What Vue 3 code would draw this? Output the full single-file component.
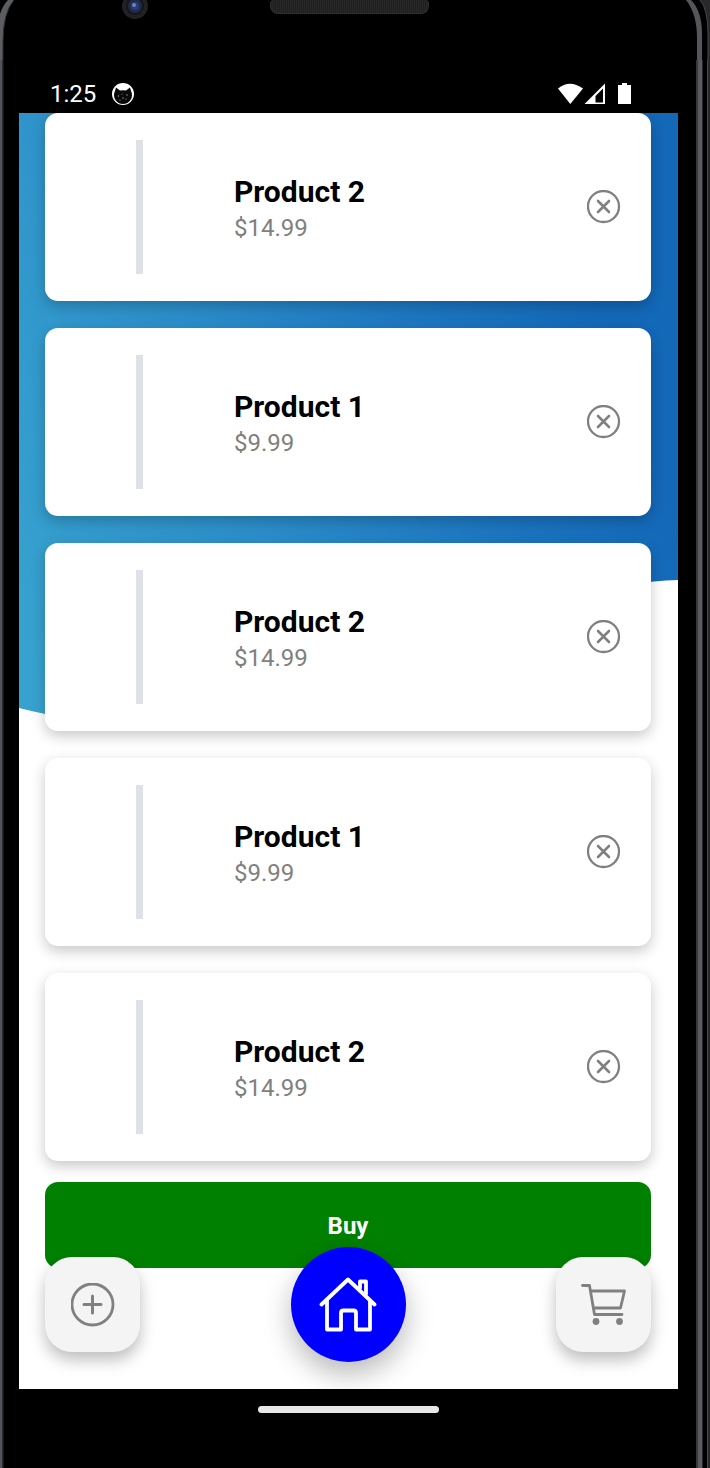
<script setup>
import { ref } from 'vue'

const items = ref([
  { id: 1, name: 'Product 2', price: 14.99 },
  { id: 2, name: 'Product 1', price: 9.99 },
  { id: 3, name: 'Product 2', price: 14.99 },
  { id: 4, name: 'Product 1', price: 9.99 },
  { id: 5, name: 'Product 2', price: 14.99 },
])

function removeItem(id) {
  items.value = items.value.filter((item) => item.id !== id)
}
</script>

<template>
  <div class="phone">
    <div class="rail rail-left" aria-hidden="true">
      <svg width="20" height="60" viewBox="0 0 20 60">
        <path d="M0 0H20V60H0Z" fill="#000" />
        <path d="M0 14Q3 5 8 0H14Q3 13 3 42V60H0Z" fill="#5b5d61" />
        <path d="M14 0Q3 13 3 42V60" fill="none" stroke="#2b2c2f" />
      </svg>
    </div>
    <div class="rail rail-right" aria-hidden="true">
      <svg width="24" height="60" viewBox="0 0 24 60">
        <path d="M0 0H24V60H0Z" fill="#000" />
        <path d="M0 0H5Q16 11 16 34V60H11V38Q11 14 0 0Z" fill="#56565a" />
        <path d="M14 0Q22 9 22 32V60H24V0Z" fill="#29292b" />
        <path d="M14 0Q22 9 22 34V60" fill="none" stroke="#48484a" />
      </svg>
    </div>

    <header class="status">
      <svg class="camera" width="28" height="20" viewBox="0 0 28 20" aria-hidden="true">
        <circle cx="14" cy="6" r="13" fill="#222224" />
        <circle cx="14" cy="6" r="9" fill="#15161b" />
        <circle cx="14" cy="6" r="7" fill="#222b47" />
        <circle cx="14" cy="6" r="4" fill="#263d80" />
        <circle cx="13" cy="5" r="2" fill="#7482b0" />
      </svg>
      <div class="speaker" aria-hidden="true"></div>
      <div class="status-row">
        <span class="time">1:25</span>
        <svg width="22" height="22" viewBox="0 0 22 22" aria-hidden="true">
          <circle cx="11" cy="11" r="11" fill="#fff" />
          <path d="M3 8L4 4.500L8 7.500Q11 6.800 14 7.500L18 4.500L19 8A9 9 0 1 1 3 8Z" fill="#090909" />
          <g fill="#aaa">
            <circle cx="6.500" cy="13" r=".7" /><circle cx="10" cy="11" r=".5" />
            <circle cx="15" cy="12" r=".7" /><circle cx="11" cy="15" r=".7" />
            <circle cx="8" cy="17" r=".6" /><circle cx="14" cy="16" r=".6" />
          </g>
        </svg>
        <svg class="signals" width="76" height="22" viewBox="0 0 76 22" aria-hidden="true">
          <path d="M1 5.500Q12.500-4 26 5.500L13.300 21Z" fill="#fff" />
          <path d="M27.500 21L48 .5V21ZM38.500 19.500H46V5.500L38.500 13Z" fill="#fff" fill-rule="evenodd" />
          <path d="M61 2H65V0H70V2H74V21H61Z" fill="#fff" />
        </svg>
      </div>
    </header>

    <main class="screen">
      <svg class="wave" viewBox="0 0 659 620" preserveAspectRatio="none" aria-hidden="true">
        <defs>
          <linearGradient id="sea" gradientUnits="userSpaceOnUse" x1="0" y1="520" x2="620" y2="300">
            <stop offset="0" stop-color="#37a2cf" />
            <stop offset=".4" stop-color="#2b8dc9" />
            <stop offset=".75" stop-color="#1c75bf" />
            <stop offset="1" stop-color="#1368b8" />
          </linearGradient>
        </defs>
        <path d="M0 0H659V467C570 469 510 510 430 545C310 600 130 630 0 595Z" fill="url(#sea)" />
      </svg>

      <ul class="cart">
        <li v-for="item in items" :key="item.id" class="card">
          <div class="thumb"><span></span></div>
          <div class="info">
            <h2>{{ item.name }}</h2>
            <p>${{ item.price }}</p>
          </div>
          <button class="remove" type="button" :aria-label="'Remove ' + item.name" @click="removeItem(item.id)">
            <svg width="34" height="34" viewBox="0 0 34 34" fill="none" stroke="#808080">
              <circle cx="16.500" cy="16.500" r="15.500" stroke-width="2.300" />
              <path d="M11 11L22 22M22 11L11 22" stroke-width="2.600" stroke-linecap="round" />
            </svg>
          </button>
        </li>
      </ul>
      <button class="buy" type="button">Buy</button>

      <nav class="tabs">
        <button class="tab" type="button" aria-label="Add product">
          <svg width="44" height="44" viewBox="0 0 44 44" fill="none" stroke="#808080">
            <circle cx="21.500" cy="21.500" r="20.500" stroke-width="2.800" />
            <path d="M21.500 13V30M13 21.500H30" stroke-width="3" stroke-linecap="round" />
          </svg>
        </button>
        <button class="tab home" type="button" aria-label="Home">
          <svg width="58" height="56" viewBox="0 0 58 56" fill="none" stroke="#fff" stroke-width="3.800" stroke-linecap="round" stroke-linejoin="round">
            <path d="M2.500 27.500L29 2.500L55.500 27.500" />
            <path d="M8 24V52.500H22V36Q22 33.500 24.500 33.500H34.500Q37 33.500 37 36V52.500H51V24" />
            <path d="M41 11V4.500H47V17" />
          </svg>
        </button>
        <button class="tab" type="button" aria-label="Cart">
          <svg width="46" height="44" viewBox="0 0 46 44" fill="none" stroke="#808080" stroke-width="2.800" stroke-linecap="round" stroke-linejoin="round">
            <path d="M1.500 2.500H8.500L13.500 31.500H41" />
            <path d="M10 8H43.500L39.500 25H12.500" />
            <g fill="#808080" stroke="none">
              <circle cx="15" cy="38.500" r="3.400" />
              <circle cx="38.500" cy="38.500" r="3.400" />
            </g>
          </svg>
        </button>
      </nav>
    </main>

    <footer class="gesture"><span></span></footer>
  </div>
</template>

<style>
body {
  margin: 0;
  background: #000;
}
</style>

<style scoped>
.phone {
  position: relative;
  box-sizing: border-box;
  min-height: 100vh;
  padding: 0 32px 0 19px;
  overflow: hidden;
  background: #000;
  font-family: Roboto, "Liberation Sans", sans-serif;
}
.rail {
  position: absolute;
  top: 0;
  bottom: 0;
}
.rail svg {
  display: block;
}
.rail-left {
  left: 0;
  width: 18px;
  background: linear-gradient(to right, #50535a 0 2px, #2b2c2f 2px 3px, #000 4px);
}
.rail-right {
  right: 0;
  width: 24px;
  background: linear-gradient(to right, #000 0 10px, #38383b 10px 12px, #5a5a5f 12px 16px, #29292b 16px 17px, #000 17px 21px, #48484a 21px 22px, #29292b 22px);
}
.status {
  position: relative;
  display: flex;
  align-items: flex-end;
  height: 113px;
}
.camera {
  position: absolute;
  top: 0;
  left: 102px;
}
.speaker {
  position: absolute;
  top: 0;
  left: 50%;
  box-sizing: border-box;
  width: 159px;
  height: 14px;
  margin-left: -79px;
  border: 1px solid #303030;
  border-top: 0;
  border-radius: 4px 4px 8px 8px;
  background: repeating-linear-gradient(to right, #202020 0 1px, #272727 1px 2px);
}
.status-row {
  display: flex;
  flex: 1;
  align-items: center;
  gap: 16px;
  height: 38px;
  padding: 0 45px 0 31px;
}
.time {
  color: #fff;
  font-size: 24px;
  line-height: 38px;
}
.signals {
  margin-left: auto;
}
.screen {
  position: relative;
  padding: 0 27px 121px 26px;
  overflow: hidden;
  background: #fff;
}
.wave {
  position: absolute;
  top: 0;
  left: 0;
  width: 100%;
  height: 620px;
}
.cart {
  position: relative;
  display: flex;
  flex-direction: column;
  gap: 27px;
  margin: 0;
  padding: 0;
  list-style: none;
}
.card {
  display: flex;
  align-items: center;
  gap: 27px;
  padding: 27px;
  border-radius: 13px;
  background: #fff;
  box-shadow: 0 5px 14px rgba(0, 0, 0, 0.22);
}
.thumb {
  display: flex;
  justify-content: center;
  width: 135px;
  height: 134px;
}
.thumb span {
  width: 7px;
  background: #dee2e8;
}
.info {
  flex: 1;
  padding-top: 4px;
}
.info h2 {
  margin: 0;
  color: #000;
  font-size: 30px;
  font-weight: 700;
  line-height: 38px;
}
.info p {
  margin: 0;
  color: #808080;
  font-size: 24px;
  line-height: 34px;
}
button {
  display: flex;
  align-items: center;
  justify-content: center;
  padding: 0;
  border: 0;
  font-family: inherit;
  cursor: pointer;
}
.remove {
  width: 40px;
  height: 40px;
  background: none;
}
.buy {
  position: relative;
  width: 100%;
  height: 86px;
  margin-top: 21px;
  padding-top: 2px;
  border-radius: 13px;
  background: #008000;
  color: #fff;
  font-size: 24px;
  font-weight: 700;
}
.tabs {
  position: absolute;
  right: 27px;
  bottom: 27px;
  left: 26px;
  display: flex;
  align-items: center;
  justify-content: space-between;
}
.tab {
  width: 95px;
  height: 95px;
  border-radius: 27px;
  background: #f4f4f4;
  box-shadow: 0 8px 16px rgba(0, 0, 0, 0.26);
}
.home {
  width: 115px;
  height: 115px;
  border-radius: 50%;
  background: #0000ff;
  box-shadow: 0 12px 28px rgba(0, 0, 0, 0.28);
}
.gesture {
  display: flex;
  justify-content: center;
  height: 62px;
  padding-top: 17px;
}
.gesture span {
  width: 181px;
  height: 7px;
  border-radius: 4px;
  background: #e8e8e8;
}
</style>
